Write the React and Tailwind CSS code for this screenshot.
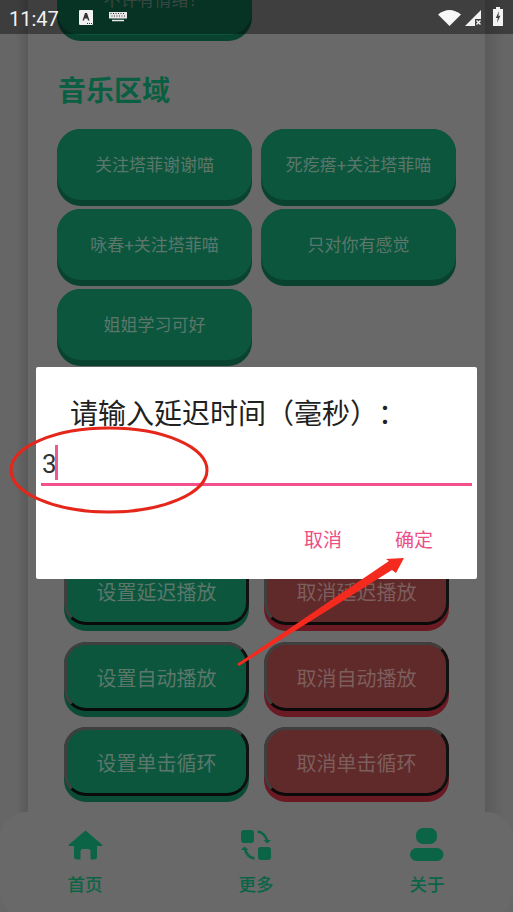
const musicBtns = ['关注塔菲谢谢喵', '死疙瘩+关注塔菲喵', '咏春+关注塔菲喵', '只对你有感觉', '姐姐学习可好']

const playRows = [
  ['设置延迟播放', '取消延迟播放'],
  ['设置自动播放', '取消自动播放'],
  ['设置单击循环', '取消单击循环'],
]

function MusicBtn({ label }) {
  return (
    <div className="h-[77px] rounded-[24px] bg-[#0a4230] pb-[6px]">
      <div className="h-full rounded-[24px] bg-[#0b563d] pt-[2px] flex items-center justify-center text-[17px] text-[#5c766c]">
        {label}
      </div>
    </div>
  )
}

function PlayBtn({ label, red }) {
  return (
    <div className={`h-[75px] rounded-[22px] pb-[6px] ${red ? 'bg-[#6a1a22]' : 'bg-[#0b4c36]'}`}>
      <div className={`h-full rounded-[22px] border-[3px] pt-[5px] border-t-[#3f3f3f] border-l-[#3f3f3f] border-r-[#111111] border-b-[#0a0a0a] flex items-center justify-center text-[20px] ${red ? 'bg-[#602a2a] text-[#7c5e5d]' : 'bg-[#0b563d] text-[#5c766c]'}`}>
        {label}
      </div>
    </div>
  )
}

function StatusBar() {
  return (
    <div className="absolute top-0 left-0 w-full h-[34px] bg-black/40 flex items-center pl-[9px] pr-[10px] text-[#f2f2f2]">
      <span className="text-[20px] leading-[34px] mt-[3px]">11:47</span>
      <svg width="14" height="15" viewBox="0 0 14 15" className="ml-[20px]">
        <rect width="14" height="15" rx="1" fill="#f2f2f2" />
        <path d="M3.5 10.5 6 3h2l2.5 7.5H9L8.4 8.6H5.6L5 10.5Z" fill="#333" />
        <path d="M8 13h1v1H8zM10 13h1v1h-1zM12 13h1v1h-1z" fill="#333" />
      </svg>
      <svg width="18" height="10" viewBox="0 0 18 10" className="ml-[16px]">
        <path d="M0 0h18v6.5H0Z" fill="#e8e8e8" />
        <path d="M1.5 1.5h1M4 1.5h1M6.5 1.5h1M9 1.5h1M11.5 1.5h1M14 1.5h1M2.5 4h1M5 4h1M7.5 4h1M10 4h1M12.5 4h1M15 4h1" stroke="#333" strokeWidth="1" />
        <path d="M3 8.5h12" stroke="#e8e8e8" strokeWidth="1.5" />
      </svg>
      <div className="ml-auto flex items-center">
        <svg width="23" height="17" viewBox="0 0 23 17">
          <path d="M0 5.5Q11.5-3.5 23 5.5L11.5 17Z" fill="#f7f7f7" />
        </svg>
        <svg width="17" height="16" viewBox="0 0 17 16" className="ml-[4px] mt-[1px]">
          <path d="M0 16 16 0v9h-6v7Z" fill="#f2f2f2" />
          <path d="m11.5 10.5 4 4m0-4-4 4" stroke="#f2f2f2" strokeWidth="1.4" />
        </svg>
        <svg width="10" height="19" viewBox="0 0 10 19" className="ml-[11px] -mt-[1px]">
          <path d="M3 0h4v2h3v17H0V2h3Z" fill="#f2f2f2" />
          <path d="M6 4 2.8 11h2L4 16l3.4-7.2h-2Z" fill="#3f3f3f" />
        </svg>
      </div>
    </div>
  )
}

function NavItem({ icon, label }) {
  return (
    <div className="w-[60px] flex flex-col items-center">
      <div className="h-[36px] flex items-center justify-center">{icon}</div>
      <span className="mt-[10px] text-[17.5px] leading-[24px] font-medium text-[#0b6446]">{label}</span>
    </div>
  )
}

function BottomNav() {
  return (
    <div className="absolute -bottom-[6px] left-0 w-full h-[106px] rounded-[26px] bg-[#696969] pt-[15px] pl-[55px] pr-[56px] flex justify-between">
      <NavItem
        label="首页"
        icon={
          <svg width="35" height="30" viewBox="0 0 35 30" fill="#0b6446">
            <path d="M17.5 0.5 34 14.5Q35.2 16 33.2 16H29V26.5Q29 29.5 26 29.5H22.5V21.5Q22.5 19 20 19H15Q12.5 19 12.5 21.5V29.5H9Q6 29.5 6 26.5V16H1.8Q-0.2 16 1 14.5Z" />
          </svg>
        }
      />
      <NavItem
        label="更多"
        icon={
          <svg width="30" height="30" viewBox="0 0 30 30" fill="#0b6446">
            <rect x="0" y="0" width="13" height="13" rx="3" />
            <rect x="17" y="17" width="13" height="13" rx="3" />
            <path d="M16.5 1.5Q23.5 2.5 26 10.5" fill="none" stroke="#0b6446" strokeWidth="2.6" />
            <path d="M22.5 10h7.5l-3.5 3.6Z" />
            <path d="M13.5 28.5Q6.5 27.5 4 19.5" fill="none" stroke="#0b6446" strokeWidth="2.6" />
            <path d="M7.5 20H0l3.5-3.6Z" />
          </svg>
        }
      />
      <NavItem
        label="关于"
        icon={
          <svg width="34" height="34" viewBox="0 0 34 34" fill="#0b6446">
            <rect x="6" y="0" width="21" height="16" rx="7" />
            <rect x="0" y="20" width="33.5" height="13" rx="6.5" />
          </svg>
        }
      />
    </div>
  )
}

function DelayDialog() {
  return (
    <div className="absolute left-[36px] top-[367px] w-[441px] h-[212px] bg-white rounded-[2px] flex flex-col">
      <div className="mt-[28px] ml-[34px] text-[28px] leading-[40px] text-[#212121] whitespace-nowrap [text-spacing-trim:space-all]">请输入延迟时间（毫秒）：</div>
      <div className="mt-[10px] mx-[5px] h-[41px] border-b-[3px] border-[#f4508c] flex items-start">
        <span className="text-[26px] leading-[30px] text-[#333333] mt-[4px] ml-px">3</span>
        <span className="w-[3px] h-[35px] bg-[#ec5a8e] -ml-[2px]" />
      </div>
      <div className="mt-[41px] flex justify-end gap-[53px] pr-[44px] text-[19px] leading-[28px] text-[#ec4f86]">
        <span>取消</span>
        <span>确定</span>
      </div>
    </div>
  )
}

function Annotations() {
  return (
    <svg width="513" height="912" viewBox="0 0 513 912" className="absolute top-0 left-0 pointer-events-none">
      <ellipse cx="109" cy="470" rx="98" ry="42" fill="none" stroke="#e5261a" strokeWidth="3" />
      <path d="M237 664 389 561 386 559 404 558 396 573 392 570 239 666Z" fill="#f42a1e" />
    </svg>
  )
}

export default function App() {
  return (
    <div className="relative w-[513px] h-[912px] overflow-hidden px-[28px] bg-[linear-gradient(90deg,#666666_0,#666666_16px,#5a5a5a_28px,#5a5a5a_484px,#666666_504px)] font-['Roboto','Noto_Sans_CJK_SC',sans-serif]">
      <div className="h-full bg-[#696969] px-[29px]">
        <div className="-mt-[36px] w-[195px]">
          <MusicBtn label="不许有情绪！" />
        </div>
        <h2 className="mt-[31px] text-[28px] leading-[40px] font-bold text-[#0a5f42] pl-px">音乐区域</h2>
        <div className="mt-[17px] grid grid-cols-[195px_195px] gap-x-[9px] gap-y-[3px]">
          {musicBtns.map((label) => (
            <MusicBtn key={label} label={label} />
          ))}
        </div>
        <div className="mt-[190px] ml-[7px] grid grid-cols-[185px_185px] gap-x-[15px] gap-y-[10.5px]">
          {playRows.map((row) =>
            row.map((label, i) => <PlayBtn key={label} label={label} red={i === 1} />)
          )}
        </div>
      </div>
      <BottomNav />
      <StatusBar />
      <DelayDialog />
      <Annotations />
    </div>
  )
}
